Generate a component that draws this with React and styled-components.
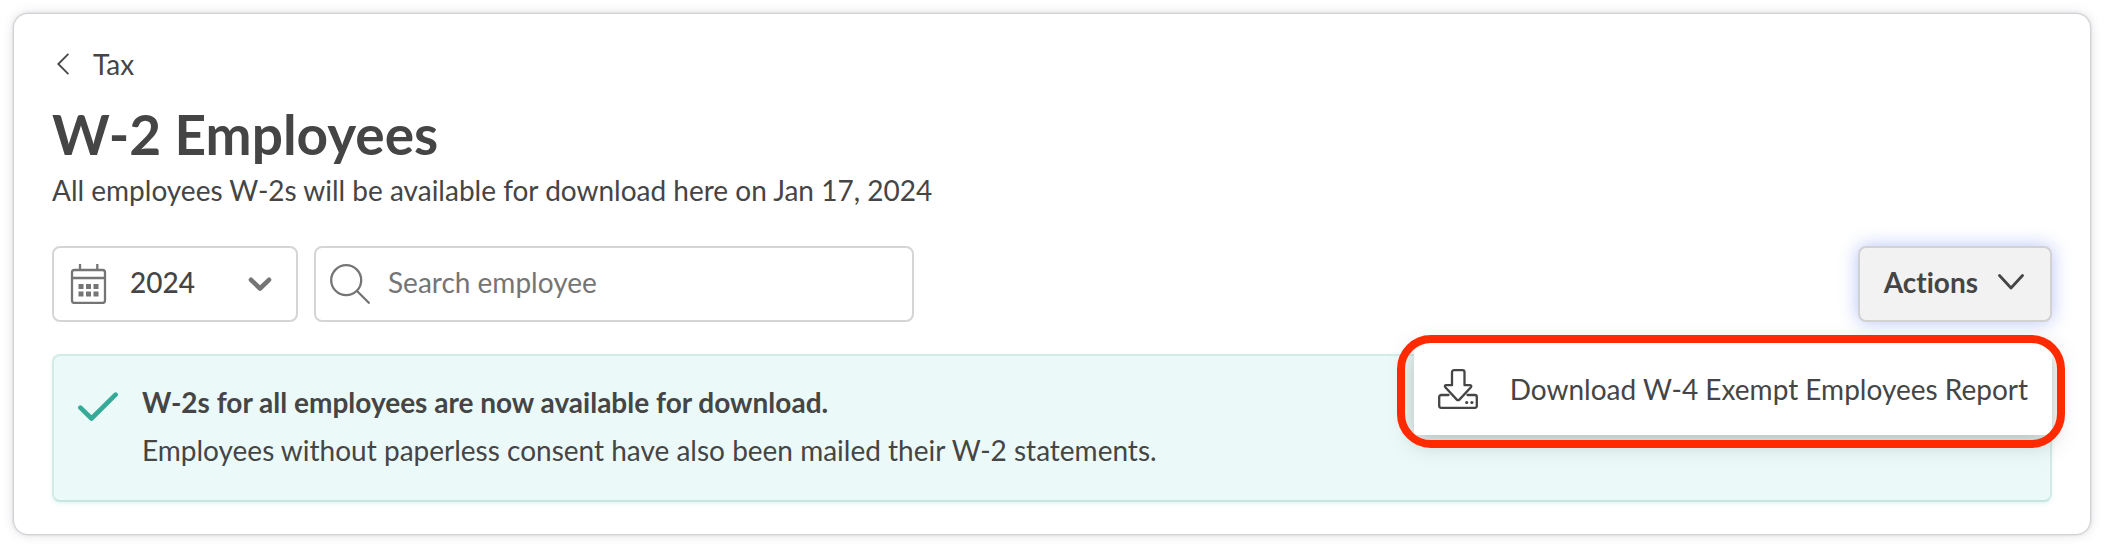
import { useState } from 'react';
import styled, { createGlobalStyle } from 'styled-components';

const GlobalStyle = createGlobalStyle`
    * {
        box-sizing: border-box;
    }

    body {
        margin: 0;
        background-color: #fff;
        color: #454545;
        font-family: Lato, 'Open Sans', sans-serif;
        font-size: 28px;
        font-variant-ligatures: none;
        line-height: 36px;
    }
`;

const Card = styled.main`
    margin: 14px;
    padding: 32px 38px;
    border-radius: 14px;
    background-color: #fff;
    box-shadow: 0 0 3px rgba(60, 65, 80, 0.45), 0 0 12px rgba(60, 65, 80, 0.2);
`;

const BackLink = styled.a`
    display: flex;
    align-items: center;
    gap: 24px;
    width: fit-content;
    padding-left: 5px;
    color: inherit;
    text-decoration: none;
`;

const Title = styled.h1`
    margin: 20px 0 0;
    font-size: 55px;
    font-weight: 700;
    line-height: 64px;
`;

const Subtitle = styled.p`
    margin: 6px 0 0;
`;

const Toolbar = styled.div`
    display: flex;
    gap: 16px;
    margin: 38px 0 32px;
`;

const Field = styled.label`
    display: grid;
    align-items: center;
    width: ${({ $width }) => $width};
    height: 76px;
    border: 2px solid #d5d5d5;
    border-radius: 8px;
    color: #757575;

    > * {
        grid-area: 1 / 1;
    }
`;

const FieldIcon = styled.span`
    display: flex;
    justify-self: ${({ $end }) => ($end ? 'end' : 'start')};
    margin: ${({ $end }) => ($end ? '0 24px 0 0' : '0 0 0 14px')};
    pointer-events: none;
`;

const YearSelect = styled.select`
    width: 100%;
    height: 100%;
    padding: 0 64px 4px 76px;
    border: none;
    background: transparent;
    color: #454545;
    font: inherit;
    font-weight: 500;
    appearance: none;
`;

const SearchInput = styled.input`
    width: 100%;
    height: 100%;
    padding: 0 16px 4px 72px;
    border: none;
    background: transparent;
    color: #454545;
    font: inherit;

    &::placeholder {
        color: #757575;
        opacity: 1;
    }
`;

const Actions = styled.div`
    position: relative;
    margin-left: auto;
`;

const ActionsButton = styled.button`
    display: flex;
    align-items: center;
    justify-content: space-between;
    gap: 20px;
    height: 76px;
    padding: 0 26px 4px 24px;
    border: 2px solid #d2d2d2;
    border-radius: 8px;
    background-color: #f2f2f2;
    box-shadow: 0 0 18px rgba(91, 122, 240, 0.45);
    color: #454545;
    font: inherit;
    font-weight: 700;
    cursor: pointer;
`;

const Menu = styled.div`
    position: absolute;
    top: calc(100% + 21px);
    right: 0;
    z-index: 1;
    border-radius: 8px 8px 0 0;
    background-color: #fff;
    box-shadow: 0 6px 24px rgba(0, 0, 0, 0.26);

    &::after {
        content: '';
        position: absolute;
        inset: -8px -13px -13px -17px;
        border: 8px solid #ff2a00;
        border-radius: 34px;
        pointer-events: none;
    }
`;

const MenuItem = styled.button`
    display: flex;
    align-items: center;
    gap: 32px;
    height: 92px;
    padding: 0 24px;
    border: none;
    background: transparent;
    color: inherit;
    font: inherit;
    white-space: nowrap;
    cursor: pointer;
`;

const Alert = styled.section`
    display: flex;
    gap: 24px;
    padding: 28px 24px;
    border: 2px solid #d3ebe6;
    border-bottom-color: #c6e7e1;
    border-radius: 8px;
    background-color: #ebfaf8;
    box-shadow: 0 2px 4px rgba(50, 170, 150, 0.12);

    > svg {
        flex: none;
        margin-top: 8px;
    }
`;

const AlertText = styled.p`
    margin: 0 0 12px;
    font-weight: ${({ $strong }) => ($strong ? 700 : 400)};

    &:last-child {
        margin-bottom: 4px;
    }
`;

const BackIcon = () => (
    <svg width="12" height="22" viewBox="0 0 12 22" fill="none" stroke="currentColor" strokeWidth="1.8" aria-hidden="true">
        <path d="M11.4 .8 1.3 11l10.1 10.2" />
    </svg>
);

const CalendarIcon = () => (
    <svg width="40" height="40" viewBox="0 0 40 40" fill="none" stroke="currentColor" strokeWidth="2.3" aria-hidden="true">
        <rect x="4" y="6" width="33" height="33" rx="2.5" />
        <path d="M4 14h33M12 0v6M29.3 0v6" />
        <path
            d="M10.5 20h5v5h-5zM18 20h5v5h-5zM25.5 20h5v5h-5zM10.5 27.5h5v5h-5zM18 27.5h5v5h-5zM25.5 27.5h5v5h-5z"
            fill="currentColor"
            stroke="none"
        />
    </svg>
);

const SelectIcon = () => (
    <svg width="24" height="16" viewBox="0 0 24 16" fill="none" stroke="currentColor" strokeWidth="4.6" strokeLinecap="round" strokeLinejoin="round" aria-hidden="true">
        <path d="M3 3.8l9 8.7 9-8.7" />
    </svg>
);

const SearchIcon = () => (
    <svg width="40" height="40" viewBox="0 0 40 40" fill="none" stroke="currentColor" strokeWidth="2.3" strokeLinecap="round" aria-hidden="true">
        <circle cx="16.2" cy="16.2" r="15" />
        <path d="M27 27l11.8 11.8" />
    </svg>
);

const ChevronIcon = () => (
    <svg width="26" height="16" viewBox="0 0 26 16" fill="none" stroke="currentColor" strokeWidth="2.8" strokeLinecap="round" strokeLinejoin="round" aria-hidden="true">
        <path d="M1.5 1.5 13 14 24.5 1.5" />
    </svg>
);

const CheckIcon = () => (
    <svg width="40" height="30" viewBox="0 0 40 30" fill="none" stroke="#35ab97" strokeWidth="4.6" strokeLinecap="round" strokeLinejoin="round" aria-hidden="true">
        <path d="M2.4 15.6 13.5 26.5 37.6 2.6" />
    </svg>
);

const DownloadIcon = () => (
    <svg width="40" height="40" viewBox="0 0 40 40" fill="none" stroke="currentColor" strokeWidth="2.3" strokeLinejoin="round" strokeLinecap="round" aria-hidden="true">
        <path d="M14 16.2V3.2a2 2 0 0 1 2-2h8.500a2 2 0 0 1 2 2v13h5.600c1.300 0 1.500 1.200.8 2L21.400 30.600a1.800 1.800 0 0 1-2.600 0L7.300 18.200c-.8-.8-.4-2 .8-2z" />
        <path d="M10.500 26H3.200a2 2 0 0 0-2 2v8.800a2 2 0 0 0 2 2h33.600a2 2 0 0 0 2-2V28a2 2 0 0 0-2-2h-7.300" />
        <circle cx="28.700" cy="33.500" r="1.600" fill="currentColor" stroke="none" />
        <circle cx="33.900" cy="33.500" r="1.600" fill="currentColor" stroke="none" />
    </svg>
);

const App = () => {
    const [year, setYear] = useState('2024');
    const [search, setSearch] = useState('');
    const [open, setOpen] = useState(true);

    return (
        <>
            <GlobalStyle />
            <Card>
                <BackLink href="#tax">
                    <BackIcon />
                    Tax
                </BackLink>
                <Title>W-2 Employees</Title>
                <Subtitle>All employees W-2s will be available for download here on Jan 17, 2024</Subtitle>

                <Toolbar>
                    <Field $width="246px">
                        <YearSelect aria-label="Year" value={year} onChange={(e) => setYear(e.target.value)}>
                            <option>2024</option>
                        </YearSelect>
                        <FieldIcon><CalendarIcon /></FieldIcon>
                        <FieldIcon $end><SelectIcon /></FieldIcon>
                    </Field>
                    <Field $width="600px">
                        <SearchInput
                            type="text"
                            aria-label="Search employee"
                            placeholder="Search employee"
                            value={search}
                            onChange={(e) => setSearch(e.target.value)}
                        />
                        <FieldIcon><SearchIcon /></FieldIcon>
                    </Field>
                    <Actions>
                        <ActionsButton type="button" aria-expanded={open} onClick={() => setOpen(!open)}>
                            Actions
                            <ChevronIcon />
                        </ActionsButton>
                        {open && (
                            <Menu>
                                <MenuItem type="button">
                                    <DownloadIcon />
                                    Download W-4 Exempt Employees Report
                                </MenuItem>
                            </Menu>
                        )}
                    </Actions>
                </Toolbar>

                <Alert>
                    <CheckIcon />
                    <div>
                        <AlertText $strong>W-2s for all employees are now available for download.</AlertText>
                        <AlertText>Employees without paperless consent have also been mailed their W-2 statements.</AlertText>
                    </div>
                </Alert>
            </Card>
        </>
    );
};

export default App;
